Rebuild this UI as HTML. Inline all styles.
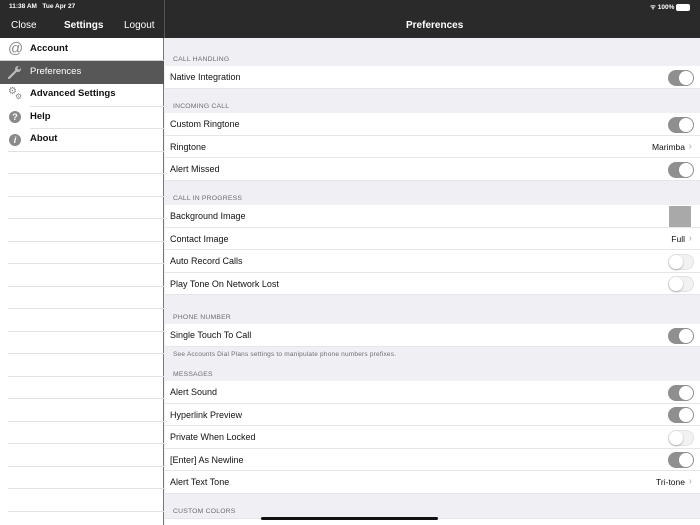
<!DOCTYPE html>
<html><head><meta charset="utf-8"><style>
*{margin:0;padding:0;box-sizing:border-box}
body{width:700px;height:525px;overflow:hidden;position:relative;font-family:"Liberation Sans",sans-serif;background:#efeff4;font-size:9px;color:#111}
.top{position:absolute;left:0;top:0;width:700px;height:38px;background:#2a2a2a;color:#fff}
.abs{position:absolute}
.side{position:absolute;left:0;top:38px;width:164px;height:487px;background:#fff;border-right:1px solid #777}
.sl{position:absolute;height:1px;background:#e2e2e2}
.si{position:absolute;left:0;width:164px;height:22.5px;font-weight:bold;font-size:9.5px;line-height:22.5px;padding-left:30px}
.row{position:absolute;left:165px;width:535px;height:22.5px;background:#fff;line-height:22.5px;padding-left:5px;border-bottom:1px solid #e6e6ea}
.hd{position:absolute;left:173px;font-size:6.8px;color:#6d6d72;letter-spacing:.2px}
.tg{position:absolute;right:6px;top:3.5px;width:26px;height:16px;border-radius:8px;background:#8f8f8f}
.tg::after{content:"";position:absolute;right:1px;top:1px;width:14px;height:14px;border-radius:7px;background:#fff}
.tg.off{background:#f2f2f2;border:1px solid #e2e2e2}
.tg.off::after{left:0;top:0;right:auto;box-shadow:0 1px 2px rgba(0,0,0,.25)}
.val{position:absolute;right:15px;top:0;font-size:8.5px}
.val::after{content:"›";position:absolute;right:-7px;color:#aaa;font-size:10px}
</style></head><body>
<div class="top">
<div class="abs" style="left:9px;top:3px;font-size:6.5px;font-weight:bold">11:38 AM &nbsp; Tue Apr 27</div>
<div class="abs" style="left:11px;top:20px;font-size:10px">Close</div>
<div class="abs" style="left:64px;top:20px;font-size:10px;font-weight:bold">Settings</div>
<div class="abs" style="left:124px;top:20px;font-size:10px">Logout</div>
<div class="abs" style="left:164px;top:0;width:1px;height:38px;background:#555"></div>
<div class="abs" style="left:406px;top:20px;font-size:10px;font-weight:bold">Preferences</div>
<div class="abs" style="left:650px;top:2px;font-size:6.5px;font-weight:bold">ᯤ 100% <span style="display:inline-block;width:14px;height:7px;background:#fff;border-radius:2px;vertical-align:middle"></span></div>
</div>
<div class="side">
<div class="si" style="top:0">Account</div>
<div class="abs" style="left:8px;top:3px;font-size:15px;color:#888;line-height:15px">@</div>
<div class="si" style="top:23px;background:#575757;color:#fff;font-weight:normal">Preferences</div>
<svg class="abs" style="left:8px;top:27px" width="14" height="14" viewBox="0 0 14 14"><path d="M1 13 L8 6" stroke="#bbb" stroke-width="2.2" stroke-linecap="round"/><circle cx="10" cy="4" r="3" fill="#bbb"/><circle cx="11" cy="3" r="1.5" fill="#575757"/></svg>
<div class="si" style="top:45px">Advanced Settings</div>
<div class="abs" style="left:8px;top:48px;font-size:10px;color:#888">⚙︎</div>
<div class="abs" style="left:15px;top:54px;font-size:8px;color:#888">⚙︎</div>
<div class="si" style="top:68px">Help</div>
<div class="abs" style="left:9px;top:73px;width:12px;height:12px;border-radius:6px;background:#8a8a8a;color:#fff;font-size:9px;font-weight:bold;text-align:center;line-height:12px">?</div>
<div class="si" style="top:90px">About</div>
<div class="abs" style="left:9px;top:96px;width:12px;height:12px;border-radius:6px;background:#8a8a8a;color:#fff;font-size:9px;font-weight:bold;font-style:italic;text-align:center;line-height:12px">i</div>
<div class="sl" style="left:0;width:164px;top:22px;background:#ccc"></div>
<div class="sl" style="left:30px;width:134px;top:67.5px"></div>
<div class="sl" style="left:30px;width:134px;top:90px"></div>
<div class="sl" style="left:8px;width:156px;top:112.5px"></div>
<div class="sl" style="left:8px;width:156px;top:135px"></div>
<div class="sl" style="left:8px;width:156px;top:157.5px"></div>
<div class="sl" style="left:8px;width:156px;top:180px"></div>
<div class="sl" style="left:8px;width:156px;top:202.5px"></div>
<div class="sl" style="left:8px;width:156px;top:225px"></div>
<div class="sl" style="left:8px;width:156px;top:247.5px"></div>
<div class="sl" style="left:8px;width:156px;top:270px"></div>
<div class="sl" style="left:8px;width:156px;top:292.5px"></div>
<div class="sl" style="left:8px;width:156px;top:315px"></div>
<div class="sl" style="left:8px;width:156px;top:337.5px"></div>
<div class="sl" style="left:8px;width:156px;top:360px"></div>
<div class="sl" style="left:8px;width:156px;top:382.5px"></div>
<div class="sl" style="left:8px;width:156px;top:405px"></div>
<div class="sl" style="left:8px;width:156px;top:427.5px"></div>
<div class="sl" style="left:8px;width:156px;top:450px"></div>
<div class="sl" style="left:8px;width:156px;top:472.5px"></div>
</div>

<div class="hd" style="top:56px">CALL HANDLING</div>
<div class="row" style="top:66px">Native Integration<div class="tg"></div></div>
<div class="hd" style="top:103px">INCOMING CALL</div>
<div class="row" style="top:113px">Custom Ringtone<div class="tg"></div></div>
<div class="row" style="top:135.5px">Ringtone<div class="val">Marimba</div></div>
<div class="row" style="top:158px">Alert Missed<div class="tg"></div></div>
<div class="hd" style="top:195px">CALL IN PROGRESS</div>
<div class="row" style="top:205px">Background Image<div class="abs" style="right:9px;top:1px;width:22px;height:21px;background:#a9a9a9"></div></div>
<div class="row" style="top:227.5px">Contact Image<div class="val">Full</div></div>
<div class="row" style="top:250px">Auto Record Calls<div class="tg off"></div></div>
<div class="row" style="top:272.5px">Play Tone On Network Lost<div class="tg off"></div></div>
<div class="hd" style="top:314px">PHONE NUMBER</div>
<div class="row" style="top:324px">Single Touch To Call<div class="tg"></div></div>
<div class="hd" style="top:351px;font-size:6.5px">See Accounts Dial Plans settings to manipulate phone numbers prefixes.</div>
<div class="hd" style="top:371px">MESSAGES</div>
<div class="row" style="top:381px">Alert Sound<div class="tg"></div></div>
<div class="row" style="top:403.5px">Hyperlink Preview<div class="tg"></div></div>
<div class="row" style="top:426px">Private When Locked<div class="tg off"></div></div>
<div class="row" style="top:448.5px">[Enter] As Newline<div class="tg"></div></div>
<div class="row" style="top:471px">Alert Text Tone<div class="val">Tri-tone</div></div>
<div class="hd" style="top:508px">CUSTOM COLORS</div>
<div class="abs" style="left:165px;top:518px;width:535px;height:7px;background:#fff;border-top:1px solid #e6e6ea"></div>
<div class="abs" style="left:261px;top:517px;width:177px;height:3px;border-radius:2px;background:#111"></div>
</body></html>
